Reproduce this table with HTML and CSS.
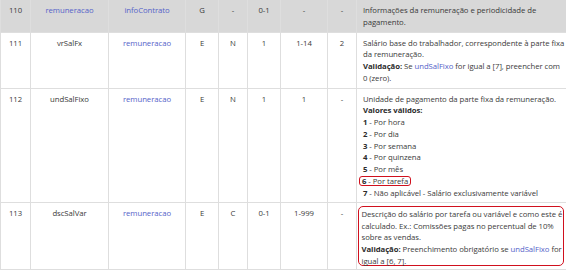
FILE: index.html
```html
<!DOCTYPE html>
<html lang="pt-BR">
<head>
<meta charset="utf-8">
<link rel="stylesheet" href="styles.css">
</head>
<body>
<table class="grid">
  <colgroup>
    <col class="c-seq"><col class="c-name"><col class="c-parent"><col class="c-el"><col class="c-type"><col class="c-occ"><col class="c-size"><col class="c-dec"><col class="c-desc">
  </colgroup>
  <tbody>
    <tr class="group">
      <td>110</td>
      <td><a class="ref">remuneracao</a></td>
      <td><a class="ref">infoContrato</a></td>
      <td>G</td>
      <td>-</td>
      <td>0-1</td>
      <td>-</td>
      <td>-</td>
      <td class="desc">Informações da remuneração e periodicidade de pagamento.</td>
    </tr>
    <tr>
      <td>111</td>
      <td>vrSalFx</td>
      <td><a class="ref">remuneracao</a></td>
      <td>E</td>
      <td>N</td>
      <td>1</td>
      <td>1-14</td>
      <td>2</td>
      <td class="desc">
        <div>Salário base do trabalhador, correspondente à parte fixa da remuneração.</div>
        <div><b>Validação:</b> Se <a class="ref">undSalFixo</a> for igual a [7], preencher com 0 (zero).</div>
      </td>
    </tr>
    <tr>
      <td>112</td>
      <td>undSalFixo</td>
      <td><a class="ref">remuneracao</a></td>
      <td>E</td>
      <td>N</td>
      <td>1</td>
      <td>1</td>
      <td>-</td>
      <td class="desc">
        <div>Unidade de pagamento da parte fixa da remuneração.</div>
        <div><b>Valores válidos:</b></div>
        <div><b>1</b> - Por hora</div>
        <div><b>2</b> - Por dia</div>
        <div><b>3</b> - Por semana</div>
        <div><b>4</b> - Por quinzena</div>
        <div><b>5</b> - Por mês</div>
        <div><span class="mark"><b>6</b> - Por tarefa</span></div>
        <div><b>7</b> - Não aplicável - Salário exclusivamente variável</div>
      </td>
    </tr>
    <tr>
      <td>113</td>
      <td>dscSalVar</td>
      <td><a class="ref">remuneracao</a></td>
      <td>E</td>
      <td>C</td>
      <td>0-1</td>
      <td>1-999</td>
      <td>-</td>
      <td class="desc">
        <div class="mark-box">
          <div>Descrição do salário por tarefa ou variável e como este é calculado. Ex.: Comissões pagas no percentual de 10% sobre as vendas.</div>
          <div><b>Validação:</b> Preenchimento obrigatório se <a class="ref">undSalFixo</a> for igual a [6, 7].</div>
        </div>
      </td>
    </tr>
  </tbody>
</table>
</body>
</html>
```

FILE: styles.css
```css
html, body {
  margin: 0;
  padding: 0;
  background: #ffffff;
}

body {
  font-family: "Open Sans", "Noto Sans", sans-serif;
  font-size: 7.75px;
  letter-spacing: -0.06px;
  line-height: 11.75px;
  color: #3b3b3b;
  overflow: hidden;
}

.grid {
  width: 566px;
  table-layout: fixed;
  border-collapse: collapse;
  margin-top: -1px;
}

.c-seq { width: 30px; }
.c-name { width: 78px; }
.c-parent { width: 77px; }
.c-el { width: 33px; }
.c-type { width: 29px; }
.c-occ { width: 33px; }
.c-size { width: 47px; }
.c-dec { width: 29px; }
.c-desc { width: 210px; }

.grid td {
  border: 1px solid #dedede;
  padding: 5px 2px 3px;
  text-align: center;
  vertical-align: top;
}

.grid td.desc {
  text-align: left;
  padding: 5px 1px 3px 6px;
}

.group td {
  background: #d8d8d8;
}

.ref {
  color: #5563c9;
  text-decoration: none;
}

b {
  font-weight: 700;
  color: #2b2b2b;
}

.mark {
  display: inline-block;
  line-height: 8px;
  padding: 0 2px 0 2px;
  margin-left: -4px;
  border: 1.5px solid #d0101e;
  border-radius: 3px;
}

.mark-box {
  box-sizing: border-box;
  height: 60px;
  margin: -2px 1px 0 -5px;
  padding: 1.5px 0 0 2.5px;
  border: 1.5px solid #d0101e;
  border-radius: 5px;
}
```
